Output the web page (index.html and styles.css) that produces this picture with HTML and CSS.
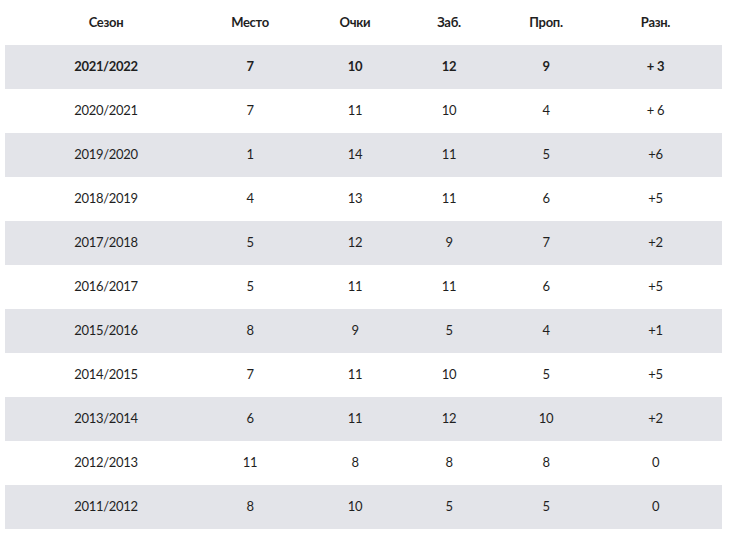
FILE: index.html
```html
<!DOCTYPE html>
<html lang="ru">
<head>
<meta charset="utf-8">
<link rel="stylesheet" href="styles.css">
</head>
<body>
<table class="stats">
  <colgroup>
    <col class="c1"><col class="c2"><col class="c3"><col class="c4"><col class="c5"><col class="c6">
  </colgroup>
  <thead>
    <tr><th>Сезон</th><th>Место</th><th>Очки</th><th>Заб.</th><th>Проп.</th><th>Разн.</th></tr>
  </thead>
  <tbody>
    <tr class="current"><td>2021/2022</td><td>7</td><td>10</td><td>12</td><td>9</td><td>+ 3</td></tr>
    <tr><td>2020/2021</td><td>7</td><td>11</td><td>10</td><td>4</td><td>+ 6</td></tr>
    <tr><td>2019/2020</td><td>1</td><td>14</td><td>11</td><td>5</td><td>+6</td></tr>
    <tr><td>2018/2019</td><td>4</td><td>13</td><td>11</td><td>6</td><td>+5</td></tr>
    <tr><td>2017/2018</td><td>5</td><td>12</td><td>9</td><td>7</td><td>+2</td></tr>
    <tr><td>2016/2017</td><td>5</td><td>11</td><td>11</td><td>6</td><td>+5</td></tr>
    <tr><td>2015/2016</td><td>8</td><td>9</td><td>5</td><td>4</td><td>+1</td></tr>
    <tr><td>2014/2015</td><td>7</td><td>11</td><td>10</td><td>5</td><td>+5</td></tr>
    <tr><td>2013/2014</td><td>6</td><td>11</td><td>12</td><td>10</td><td>+2</td></tr>
    <tr><td>2012/2013</td><td>11</td><td>8</td><td>8</td><td>8</td><td>0</td></tr>
    <tr><td>2011/2012</td><td>8</td><td>10</td><td>5</td><td>5</td><td>0</td></tr>
  </tbody>
</table>
</body>
</html>
```

FILE: styles.css
```css
html, body {
  margin: 0;
  padding: 0;
  background: #ffffff;
}

body {
  padding: 0 8px 0 5px;
  font-family: "Lato", "Open Sans", sans-serif;
  font-size: 13px;
  letter-spacing: -0.3px;
  color: #1f1f1f;
}

.stats {
  width: 717px;
  border-collapse: collapse;
  table-layout: fixed;
}

.c1 { width: 202px; }
.c2 { width: 86px; }
.c3 { width: 124px; }
.c4 { width: 64px; }
.c5 { width: 130px; }
.c6 { width: 111px; }

.stats th,
.stats td {
  text-align: center;
  padding: 0 0 2px;
  white-space: nowrap;
}

.stats th:last-child,
.stats td:last-child {
  padding-right: 22px;
}

.stats thead tr {
  height: 45px;
}

.stats th {
  font-weight: 700;
}

.stats tbody tr {
  height: 44px;
}

.stats tbody tr:nth-child(odd) {
  background: #e3e4e9;
}

.stats tr.current td {
  font-weight: 700;
}
```
